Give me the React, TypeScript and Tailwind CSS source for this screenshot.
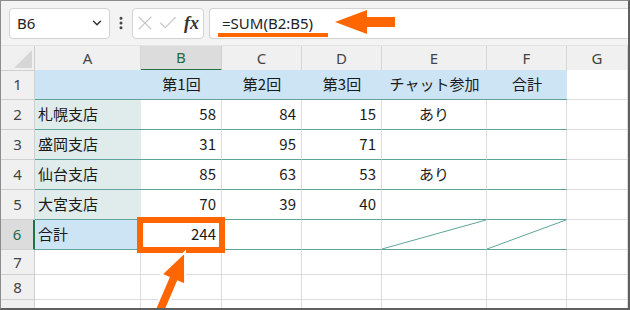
import { Check, ChevronDown, EllipsisVertical, X } from "lucide-react";

const cols = "grid grid-cols-[34px_106px_81px_80px_80px_105px_80px_1fr]";
const letters = ["A", "B", "C", "D", "E", "F", "G"];

type Row = { h: string; cells: string[] };

const rows: Row[] = [
  { h: "h-[30px]", cells: ["", "第1回", "第2回", "第3回", "チャット参加", "合計", ""] },
  { h: "h-[30px]", cells: ["札幌支店", "58", "84", "15", "あり", "", ""] },
  { h: "h-[30px]", cells: ["盛岡支店", "31", "95", "71", "", "", ""] },
  { h: "h-[30px]", cells: ["仙台支店", "85", "63", "53", "あり", "", ""] },
  { h: "h-[30px]", cells: ["大宮支店", "70", "39", "40", "", "", ""] },
  { h: "h-[30px]", cells: ["合計", "244", "", "", "", "", ""] },
  { h: "h-[25px]", cells: ["", "", "", "", "", "", ""] },
  { h: "h-[25px]", cells: ["", "", "", "", "", "", ""] },
  { h: "h-[25px]", cells: ["", "", "", "", "", "", ""] },
];

function cellClass(r: number, c: number) {
  if (r === 1 && c <= 5) return "bg-[#cde4f5] border-b border-[#5fa39a] justify-center";
  if (r >= 2 && r <= 5 && c === 0)
    return "bg-[#dfeceb] border-b border-[#5fa39a] justify-start pl-[3px]";
  if (r === 6 && c === 0) return "bg-[#cde4f5] border-b border-[#5fa39a] justify-start pl-[3px]";
  if (r <= 6 && c <= 5) {
    const align = c === 4 ? "justify-center" : "justify-end pr-[5px]";
    return `bg-white border-r border-r-[#dcdcdc] border-b border-b-[#5fa39a] ${align}`;
  }
  return "bg-white border-r border-b border-[#dcdcdc]";
}

function Diagonal() {
  return (
    <svg
      className="absolute inset-0 h-full w-full"
      viewBox="0 0 100 100"
      preserveAspectRatio="none"
    >
      <line
        x1="0"
        y1="100"
        x2="100"
        y2="0"
        stroke="#5fa39a"
        strokeWidth="1"
        vectorEffect="non-scaling-stroke"
      />
    </svg>
  );
}

export default function App() {
  return (
    <div className="relative h-[310px] w-[630px] overflow-hidden border-l border-t border-r-2 border-b-2 border-l-[#8c8c8c] border-t-[#8c8c8c] border-r-[#5f5f5f] border-b-[#5f5f5f] bg-white font-['Noto_Sans','Noto_Sans_CJK_JP',sans-serif] text-[15px] text-[#1a1a1a]">
      {/* formula bar */}
      <div className="flex h-[45px] items-center border-b border-[#e4e4e4] bg-[#f3f3f3] pl-[8px]">
        <div className="flex h-[31px] w-[101px] items-center justify-between rounded-[4px] border border-[#d3d3d3] bg-white pl-[7px] pr-[5px]">
          <span className="text-[#222]">B6</span>
          <ChevronDown size={14} strokeWidth={2.5} className="text-[#333]" />
        </div>
        <div className="flex w-[22px] justify-center">
          <EllipsisVertical size={16} strokeWidth={2.5} className="text-[#444]" />
        </div>
        <div className="flex h-[31px] w-[72px] items-center rounded-[4px] border border-[#d3d3d3] bg-white">
          <X size={24} strokeWidth={1.1} className="text-[#c6c6c6]" />
          <Check size={22} strokeWidth={1.2} className="text-[#c6c6c6]" />
          <span className="ml-[5px] font-['Liberation_Serif',serif] text-[18px] font-semibold italic leading-none text-[#333]">
            fx
          </span>
        </div>
        <div className="ml-[5px] flex h-[31px] flex-1 items-center rounded-l-[4px] border border-r-0 border-[#d3d3d3] bg-white pl-[12px] text-[#222]">
          =SUM(B2:B5)
        </div>
      </div>

      {/* column headers */}
      <div className={`${cols} h-[24px] bg-[#f0f0f0] text-[#444]`}>
        <div className="relative border-r border-b border-[#d0d0d0]">
          <svg className="absolute right-[2px] bottom-[2px]" width="18" height="18" viewBox="0 0 18 18">
            <polygon points="18,0 18,18 0,18" fill="#d6d6d6" />
          </svg>
        </div>
        {letters.map((l) =>
          l === "B" ? (
            <div
              key={l}
              className="flex items-center justify-center border-r border-b-2 border-r-[#d0d0d0] border-b-[#217346] bg-[#dcdcdc] text-[#1f6b45]"
            >
              {l}
            </div>
          ) : (
            <div
              key={l}
              className="flex items-center justify-center border-r border-b border-[#d6d6d6]"
            >
              {l}
            </div>
          )
        )}
      </div>

      {/* rows */}
      {rows.map((row, i) => {
        const r = i + 1;
        return (
          <div key={r} className={`${cols} ${row.h}`}>
            {r === 6 ? (
              <div className="flex items-center justify-center border-r-2 border-b border-r-[#217346] border-b-[#d0d0d0] bg-[#dcdcdc] text-[#1f6b45]">
                {r}
              </div>
            ) : (
              <div className="flex items-center justify-center border-r border-b border-[#d0d0d0] bg-[#f0f0f0] text-[#444]">
                {r}
              </div>
            )}
            {row.cells.map((v, c) => (
              <div
                key={c}
                className={`relative flex items-center font-['Noto_Sans_CJK_JP',sans-serif] ${cellClass(r, c)}`}
              >
                {r === 6 && (c === 4 || c === 5) && <Diagonal />}
                {v}
              </div>
            ))}
          </div>
        );
      })}

      {/* callouts */}
      <svg
        className="pointer-events-none absolute left-[-1px] top-[-1px]"
        width="630"
        height="310"
        viewBox="0 0 630 310"
      >
        <rect x="218" y="33" width="110" height="4" fill="#ff6600" />
        <polygon
          points="335,22 367,10 367,17 395,17 395,27 367,27 367,34"
          fill="#ff6600"
        />
        <rect x="140" y="220" width="82" height="30" fill="none" stroke="#ff6600" strokeWidth="6" />
        <polygon
          points="185,252 185.1,284.7 177.8,281.6 156.1,332.1 146.9,328.1 168.6,277.6 161.3,274.5"
          fill="#ff6600"
          stroke="#ffffff"
          strokeWidth="2"
          strokeLinejoin="miter"
        />
      </svg>
    </div>
  );
}
